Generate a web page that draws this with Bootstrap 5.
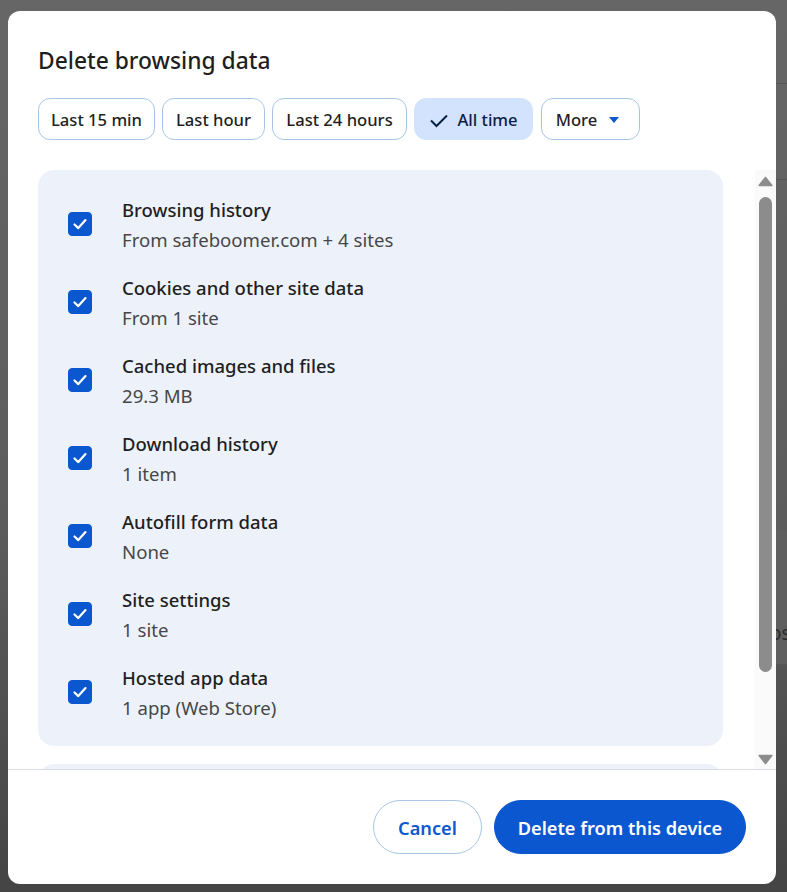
<!DOCTYPE html>
<html lang="en">
<head>
    <meta charset="UTF-8">
    <meta name="viewport" content="width=device-width, initial-scale=1.0">
    <title>Delete browsing data</title>
    <link href="https://cdn.jsdelivr.net/npm/bootstrap@5.3.0/dist/css/bootstrap.min.css" rel="stylesheet">
    <style>
        html, body { height: 892px; overflow: hidden; }
        body {
            font-family: "Noto Sans", "Liberation Sans", sans-serif;
            background: linear-gradient(180deg, #666 0%, #5c5c5c 60%, #444 100%);
            color: #1f1f1f;
            position: relative;
        }
        /* page behind the dialog, only a sliver shows on the right */
        .behind-text { position: absolute; left: 770px; top: 619px; font-size: 19px; color: #2c2c2c; white-space: nowrap; }
        .behind-panel { position: absolute; left: 770px; right: 0; top: 530px; height: 135px; background: #5f5f5f; border-bottom: 1px solid #555; }
        .behind-line { position: absolute; left: 770px; right: 0; top: 83px; height: 97px; border-top: 1px solid #565656; border-bottom: 1px solid #565656; }
        .dialog {
            position: absolute; left: 8px; top: 11px;
            width: 768px; height: 873px;
            background: #fff; border-radius: 12px;
        }
        .dialog-title { font-size: 22.8px; font-weight: 500; line-height: 30px; padding: 35px 30px 0; margin: 0; color: #1f1f1f; }
        .chips { padding: 22px 30px 0; gap: 7px; height: 64px; }
        .chip {
            height: 42px; padding: 2px 0 0; justify-content: center; font-size: 16.6px; font-weight: 500; line-height: 1;
            border: 1px solid #a8c7e8; border-radius: 12px; background: #fff; color: #1f1f1f;
            white-space: nowrap;
        }
        .chip-15 { width: 117px; }
        .chip-hour { width: 103px; }
        .chip-24 { width: 135px; }
        .chip-all { width: 119px; }
        .chip-more { width: 99px; margin-left: 1px; }
        .chip.active { background: #d3e3fd; border-color: #d3e3fd; color: #0a1f44; }
        .chip .caret { width: 0; height: 0; border: 5.5px solid transparent; border-top: 6px solid #0b57d0; border-bottom: 0; margin-left: 12px; margin-right: 6px; }
        .body-area { height: 599px; margin-top: 30px; overflow: hidden; }
        .scroll-content { width: 747px; padding-left: 30px; }
        .section { background: #edf2fa; border-radius: 16px; width: 685px; padding: 15px 0 15px 30px; margin-bottom: 18px; }
        .section.next { height: 60px; padding: 0; margin: 0; }
        .data-row { height: 78px; gap: 30px; }
        .form-check-input.data-check {
            width: 24px; height: 24px; margin: 0; flex: none;
            background-color: #0b57d0; border-color: #0b57d0; border-radius: 4px; float: none;
            background-size: 24px 24px;
            background-image: url("data:image/svg+xml,%3csvg xmlns='http://www.w3.org/2000/svg' viewBox='0 0 24 24'%3e%3cpath fill='none' stroke='%23fff' stroke-width='2.2' stroke-linecap='round' stroke-linejoin='round' d='M6.5 12.5l3.8 3.6 7.2-8'/%3e%3c/svg%3e");
        }
        .row-text { padding-top: 2px; }
        .row-title { font-size: 18.5px; font-weight: 500; line-height: 30px; color: #1f1f1f; }
        .row-sub { font-size: 18.6px; line-height: 30px; color: #474747; }
        .fake-scroll { width: 21px; background: #fafafa; padding-top: 6px; margin-left: auto; }
        .thumb { width: 13px; height: 475px; background: #8c8c8c; border-radius: 7px; margin: 10px 0 82px; }
        .dialog-footer { height: 115px; border-top: 1px solid #d9dde3; padding: 30px 30px 0 0; gap: 12px; }
        .btn-pill { height: 54px; border-radius: 27px; font-size: 18.2px; font-weight: 600; padding: 2px 0 0; line-height: 1; }
        .btn-cancel { width: 109px; color: #0b57d0; background: #fff; border: 1px solid #a8c7e8; }
        .btn-delete { width: 252px; color: #fff; background: #0b57d0; border: 1px solid #0b57d0; }
    </style>
</head>
<body>

    <div class="behind-line"></div>
    <div class="behind-panel"></div>
    <div class="behind-text">os</div>

    <div class="dialog d-flex flex-column overflow-hidden">
        <h1 class="dialog-title">Delete browsing data</h1>

        <div class="chips d-flex align-items-start">
            <button type="button" class="chip chip-15 btn d-flex align-items-center">Last 15 min</button>
            <button type="button" class="chip chip-hour btn d-flex align-items-center">Last hour</button>
            <button type="button" class="chip chip-24 btn d-flex align-items-center">Last 24 hours</button>
            <button type="button" class="chip chip-all btn active d-flex align-items-center">
                <svg width="20" height="20" viewBox="0 0 20 20" class="me-2" fill="none" stroke="#0a1f44" stroke-width="2"><path d="M2 10.5l5.5 5.5L18 5.5"/></svg>All time
            </button>
            <button type="button" class="chip chip-more btn d-flex align-items-center">More<span class="caret"></span></button>
        </div>

        <div class="body-area d-flex">
            <div class="scroll-content">
                <div class="section">
                    <div class="data-row d-flex align-items-center">
                        <input class="form-check-input data-check" type="checkbox" checked aria-label="Browsing history">
                        <div class="row-text"><div class="row-title">Browsing history</div><div class="row-sub">From safeboomer.com + 4 sites</div></div>
                    </div>
                    <div class="data-row d-flex align-items-center">
                        <input class="form-check-input data-check" type="checkbox" checked aria-label="Cookies and other site data">
                        <div class="row-text"><div class="row-title">Cookies and other site data</div><div class="row-sub">From 1 site</div></div>
                    </div>
                    <div class="data-row d-flex align-items-center">
                        <input class="form-check-input data-check" type="checkbox" checked aria-label="Cached images and files">
                        <div class="row-text"><div class="row-title">Cached images and files</div><div class="row-sub">29.3 MB</div></div>
                    </div>
                    <div class="data-row d-flex align-items-center">
                        <input class="form-check-input data-check" type="checkbox" checked aria-label="Download history">
                        <div class="row-text"><div class="row-title">Download history</div><div class="row-sub">1 item</div></div>
                    </div>
                    <div class="data-row d-flex align-items-center">
                        <input class="form-check-input data-check" type="checkbox" checked aria-label="Autofill form data">
                        <div class="row-text"><div class="row-title">Autofill form data</div><div class="row-sub">None</div></div>
                    </div>
                    <div class="data-row d-flex align-items-center">
                        <input class="form-check-input data-check" type="checkbox" checked aria-label="Site settings">
                        <div class="row-text"><div class="row-title">Site settings</div><div class="row-sub">1 site</div></div>
                    </div>
                    <div class="data-row d-flex align-items-center">
                        <input class="form-check-input data-check" type="checkbox" checked aria-label="Hosted app data">
                        <div class="row-text"><div class="row-title">Hosted app data</div><div class="row-sub">1 app (Web Store)</div></div>
                    </div>
                </div>
                <div class="section next"></div>
            </div>

            <div class="fake-scroll d-flex flex-column align-items-center">
                <svg width="15" height="11" viewBox="0 0 15 11" class="flex-shrink-0"><path d="M7.5 1.5L13.8 9.5H1.2z" fill="#8c8c8c" stroke="#8c8c8c" stroke-width="1.6" stroke-linejoin="round"/></svg>
                <div class="thumb flex-shrink-0"></div>
                <svg width="15" height="11" viewBox="0 0 15 11" class="flex-shrink-0"><path d="M7.5 9.5L13.8 1.5H1.2z" fill="#8c8c8c" stroke="#8c8c8c" stroke-width="1.6" stroke-linejoin="round"/></svg>
            </div>
        </div>

        <div class="dialog-footer d-flex justify-content-end align-items-start">
            <button type="button" class="btn btn-pill btn-cancel">Cancel</button>
            <button type="button" class="btn btn-pill btn-delete">Delete from this device</button>
        </div>
    </div>

    <script src="https://cdn.jsdelivr.net/npm/bootstrap@5.3.0/dist/js/bootstrap.bundle.min.js"></script>
</body>
</html>
